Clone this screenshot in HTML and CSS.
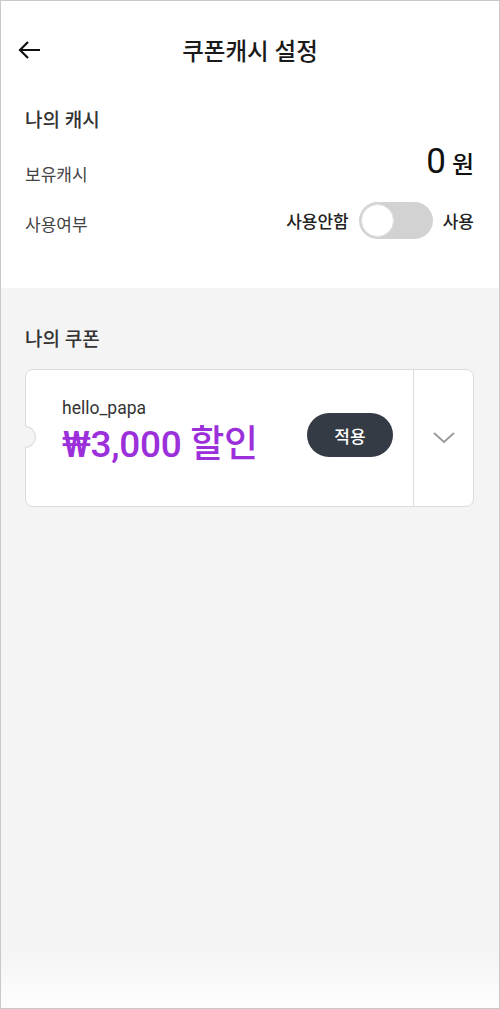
FILE: index.html
```html
<!DOCTYPE html>
<html lang="ko">
<head>
<meta charset="utf-8">
<link rel="stylesheet" href="styles.css">
</head>
<body>
<div class="screen">
  <header class="topbar">
    <svg class="back" width="24" height="20" viewBox="0 0 24 20"><path d="M22 10H2M10 2L2 10L10 18" fill="none" stroke="#111" stroke-width="2.2"/></svg>
    <h1 class="title">쿠폰캐시 설정</h1>
  </header>
  <section class="cash">
    <h2 class="sec-title">나의 캐시</h2>
    <div class="row row-balance">
      <span class="label">보유캐시</span>
      <span class="amount"><span class="num">0</span><span class="won">원</span></span>
    </div>
    <div class="row row-use">
      <span class="label">사용여부</span>
      <div class="switch-wrap">
        <span class="sw-text">사용안함</span>
        <span class="switch"><span class="knob"></span></span>
        <span class="sw-text">사용</span>
      </div>
    </div>
  </section>
  <section class="coupons">
    <h2 class="sec-title">나의 쿠폰</h2>
    <div class="coupon">
      <span class="notch"></span>
      <div class="coupon-main">
        <div class="coupon-info">
          <div class="code">hello_papa</div>
          <div class="discount">₩3,000 할인</div>
        </div>
        <button class="apply">적용</button>
      </div>
      <div class="coupon-side">
        <svg width="24" height="14" viewBox="0 0 24 14"><path d="M2 2L12 11L22 2" fill="none" stroke="#999" stroke-width="1.8"/></svg>
      </div>
    </div>
  </section>
</div>
</body>
</html>
```

FILE: styles.css
```css
* { box-sizing: border-box; margin: 0; padding: 0; }
html, body { width: 500px; height: 1009px; }
body {
  font-family: Roboto, "Noto Sans CJK KR", sans-serif;
  color: #222;
  background: #fff;
}
.screen {
  width: 500px;
  height: 1009px;
  border: 1px solid #c9c9c9;
  display: flex;
  flex-direction: column;
  background: #fff;
}
.topbar {
  height: 100px;
  display: flex;
  align-items: center;
  position: relative;
  padding-left: 17px;
}
.back { display: block; margin-top: -2px; }
.title {
  position: absolute;
  left: 0; right: 0;
  text-align: center;
  font-size: 23.5px;
  font-weight: 500;
  color: #1a1a1a;
  pointer-events: none;
  margin-top: -2px;
}
.cash {
  padding: 6px 25px 0 24px;
  height: 187px;
}
.sec-title {
  font-size: 19px;
  font-weight: 500;
  color: #333;
  line-height: 28px;
}
.row {
  display: flex;
  justify-content: space-between;
  align-items: center;
}
.label { font-size: 17px; color: #444; }
.row-balance { height: 52px; margin-top: 4px; }
.row-balance .label { margin-top: 16px; }
.amount { display: flex; align-items: baseline; color: #111; margin-top: -8px; }
.num { font-size: 35px; font-weight: 400; }
.won { font-size: 24px; font-weight: 500; margin-left: 6px; }
.row-use { height: 40px; margin-top: 9px; }
.row-use .label { margin-top: 6px; }
.switch-wrap { display: flex; align-items: center; }
.sw-text { font-size: 17px; font-weight: 500; color: #222; }
.switch {
  width: 74px; height: 37px;
  border-radius: 19px;
  background: #d2d2d2;
  margin: 0 10px;
  padding: 2px;
  display: flex;
  align-items: center;
}
.knob {
  width: 33px; height: 33px;
  border-radius: 50%;
  background: #fff;
  border: 1px solid #e2e2e2;
}
.coupons {
  flex: 1;
  background: linear-gradient(#f4f4f4 calc(100% - 60px), #fdfdfd);
  padding: 38px 25px 0 24px;
}
.coupons .sec-title { margin-bottom: 15px; }
.coupon {
  position: relative;
  height: 138px;
  background: #fff;
  border: 1px solid #dcdcdc;
  border-radius: 8px;
  display: flex;
}
.notch {
  position: absolute;
  left: -1px;
  top: 56px;
  width: 11px;
  height: 22px;
  background: #f4f4f4;
  border: 1px solid #dcdcdc;
  border-left: none;
  border-radius: 0 11px 11px 0;
}
.coupon-main {
  flex: 1;
  display: flex;
  align-items: center;
  justify-content: space-between;
  padding: 0 20px 0 36px;
  border-right: 1px solid #dcdcdc;
}
.coupon-info { margin-top: -12px; }
.code { font-size: 17.5px; color: #333; line-height: 22px; margin-bottom: 3px; }
.discount {
  font-size: 37px;
  font-weight: 500;
  color: #9b30db;
  line-height: 46px;
  letter-spacing: -0.3px;
}
.apply {
  width: 86px; height: 44px;
  border: none;
  border-radius: 22px;
  background: #353b44;
  color: #fff;
  font-family: inherit;
  font-size: 17px;
  font-weight: 500;
  margin-top: -6px;
}
.coupon-side {
  width: 59px;
  display: flex;
  align-items: center;
  justify-content: center;
}
```
